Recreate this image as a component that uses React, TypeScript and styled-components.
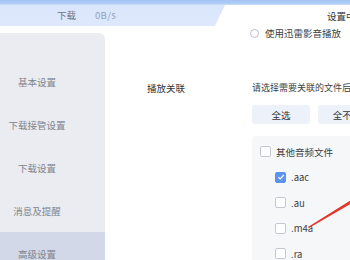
import React from "react";
import styled, { createGlobalStyle } from "styled-components";

const GlobalStyle = createGlobalStyle`
  html, body {
    margin: 0;
    padding: 0;
    width: 350px;
    height: 260px;
    overflow: hidden;
    background: #ffffff;
  }
  body {
    font-family: "Noto Sans CJK SC", "Noto Sans", sans-serif;
  }
`;

const Page = styled.div`
  position: relative;
  width: 350px;
  height: 260px;
  overflow: hidden;
  display: flex;
  flex-direction: column;
`;

const TopBar = styled.div`
  height: 26px;
  flex-shrink: 0;
  display: flex;
  background: linear-gradient(to bottom, #a2c3f3 0, #b3cff7 4px, #dae6fb 5px, #dde8fc 100%);
`;

const Speed = styled.div`
  width: 215px;
  display: flex;
  align-items: center;
  gap: 19px;
  padding-left: 57px;
  box-sizing: border-box;
  font-size: 9.5px;
  padding-top: 4px;
`;

const SpeedLabel = styled.span<{ $muted?: boolean }>`
  color: ${(p) => (p.$muted ? "#8fa3c6" : "#6c7384")};
  letter-spacing: ${(p) => (p.$muted ? "0.3px" : "0")};
`;

const Tab = styled.div`
  flex: 1;
  margin-top: 5px;
  background: #ffffff;
  clip-path: polygon(10px 0, 100% 0, 100% 100%, 0 100%);
  display: flex;
  align-items: center;
  padding-left: 112px;
  font-size: 9.5px;
  color: #333;
  white-space: nowrap;
  overflow: hidden;
`;

const Body = styled.div`
  flex: 1;
  display: flex;
  min-height: 0;
`;

const Sidebar = styled.div`
  width: 105px;
  flex-shrink: 0;
  margin-top: 7px;
  padding-top: 27px;
  background: #eaecf1;
  border-top-right-radius: 6px;
  display: flex;
  flex-direction: column;
`;

const SideItem = styled.div<{ $active?: boolean }>`
  height: 43px;
  flex-shrink: 0;
  display: flex;
  align-items: center;
  justify-content: center;
  padding-right: 31px;
  font-size: 9.5px;
  color: #80848c;
  white-space: nowrap;
  background: ${(p) => (p.$active ? "#d2d8e7" : "transparent")};
`;

const Main = styled.div`
  flex: 1;
  display: flex;
  flex-direction: column;
  min-width: 0;
`;

const RadioRow = styled.div`
  height: 18px;
  margin-left: 145px;
  display: flex;
  align-items: center;
  gap: 6px;
  font-size: 9.5px;
  color: #3c3f45;
  white-space: nowrap;
`;

const Radio = styled.span`
  width: 9px;
  height: 9px;
  border-radius: 50%;
  border: 1px solid #b9bec8;
  box-sizing: border-box;
  background: #fff;
  flex-shrink: 0;
`;

const Section = styled.div`
  margin-top: 41px;
  display: grid;
  grid-template-columns: 145px 1fr;
`;

const SectionLabel = styled.div`
  padding-left: 42px;
  font-size: 9.5px;
  line-height: 14px;
  color: #33363b;
  white-space: nowrap;
`;

const Content = styled.div`
  display: flex;
  flex-direction: column;
  min-width: 0;
`;

const Hint = styled.div`
  font-size: 9px;
  line-height: 14px;
  color: #3c3f45;
  white-space: nowrap;
  padding-left: 2px;
`;

const Buttons = styled.div`
  margin-top: 10px;
  display: flex;
  gap: 8px;
  padding-left: 2px;
`;

const Button = styled.div`
  width: 58px;
  height: 19px;
  flex-shrink: 0;
  border-radius: 3px;
  background: #edf1f9;
  display: flex;
  align-items: center;
  justify-content: center;
  font-size: 9.5px;
  color: #33363b;
  white-space: nowrap;
`;

const Panel = styled.div`
  margin-top: 12px;
  margin-left: 2px;
  padding: 3px 0 0 8px;
  background: #f6f7f9;
  border-top-left-radius: 4px;
  display: flex;
  flex-direction: column;
  height: 160px;
`;

const CheckRow = styled.div<{ $indent?: boolean }>`
  height: 25.5px;
  flex-shrink: 0;
  display: flex;
  align-items: center;
  gap: 5px;
  padding-left: ${(p) => (p.$indent ? "15px" : "0")};
  font-size: 9.5px;
  color: #3c3f45;
  white-space: nowrap;
`;

const Box = styled.span<{ $checked?: boolean }>`
  width: 11px;
  height: 11px;
  box-sizing: border-box;
  border-radius: 2px;
  flex-shrink: 0;
  border: 1px solid ${(p) => (p.$checked ? "#5b93ef" : "#c3c8d1")};
  background: ${(p) => (p.$checked ? "#5b93ef" : "#ffffff")};
  display: flex;
  align-items: center;
  justify-content: center;
`;

const Annotation = styled.svg`
  position: absolute;
  left: 0;
  top: 0;
  pointer-events: none;
`;

const Check = () => (
  <svg width="8" height="8" viewBox="0 0 8 8">
    <path d="M1.3 4.1 L3.2 6 L6.8 2" fill="none" stroke="#fff" strokeWidth="1.2" />
  </svg>
);

const menu = ["基本设置", "下载接管设置", "下载设置", "消息及提醒", "高级设置"];

const formats = [
  { name: ".aac", checked: true },
  { name: ".au", checked: false },
  { name: ".m4a", checked: false },
  { name: ".ra", checked: false },
];

export default function App() {
  return (
    <>
      <GlobalStyle />
      <Page>
        <TopBar>
          <Speed>
            <SpeedLabel>下载</SpeedLabel>
            <SpeedLabel $muted>0B/s</SpeedLabel>
          </Speed>
          <Tab>设置中心</Tab>
        </TopBar>
        <Body>
          <Sidebar>
            {menu.map((m, i) => (
              <SideItem key={m} $active={i === menu.length - 1}>
                {m}
              </SideItem>
            ))}
          </Sidebar>
          <Main>
            <RadioRow>
              <Radio />
              使用迅雷影音播放
            </RadioRow>
            <Section>
              <SectionLabel>播放关联</SectionLabel>
              <Content>
                <Hint>请选择需要关联的文件后缀</Hint>
                <Buttons>
                  <Button>全选</Button>
                  <Button>全不选</Button>
                </Buttons>
                <Panel>
                  <CheckRow>
                    <Box />
                    其他音频文件
                  </CheckRow>
                  {formats.map((f) => (
                    <CheckRow key={f.name} $indent>
                      <Box $checked={f.checked}>{f.checked && <Check />}</Box>
                      {f.name}
                    </CheckRow>
                  ))}
                </Panel>
              </Content>
            </Section>
          </Main>
        </Body>
        <Annotation width="350" height="260" viewBox="0 0 350 260">
          <polygon points="308,227 351,200 352,203 309,228" fill="#e2362b" />
        </Annotation>
      </Page>
    </>
  );
}
